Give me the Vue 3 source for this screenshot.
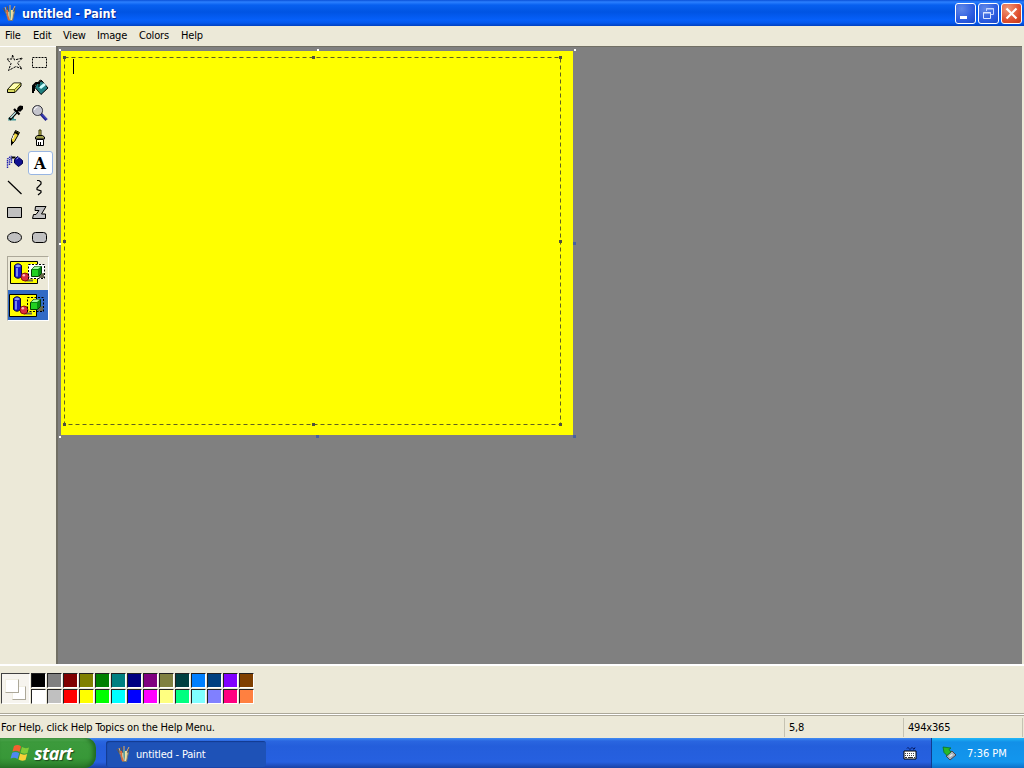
<template>
  <div class="desktop">
    <!-- Title bar -->
    <header class="title-bar">
      <svg class="app-icon" width="16" height="18" viewBox="0 0 16 18">
        <path v-for="(p, i) in cupIcon" :key="i" :d="p.d" :fill="p.fill" :stroke="p.stroke" />
      </svg>
      <h1 class="title">untitled - Paint</h1>
      <div class="window-buttons">
        <button class="win-btn" title="Minimize">
          <svg width="19" height="19" viewBox="0 0 19 19"><path d="M4 12h7v3H4z" fill="#fff" /></svg>
        </button>
        <button class="win-btn" title="Restore">
          <svg width="19" height="19" viewBox="0 0 19 19">
            <path d="M7.500 7V4.500h7v6H12M7 5h8" fill="none" stroke="#c4d4ff" />
            <path d="M4.500 8.500h7v6h-7zM4 9h8" fill="none" stroke="#dce6ff" />
          </svg>
        </button>
        <button class="win-btn close" title="Close">
          <svg width="19" height="19" viewBox="0 0 19 19"><path d="M4.500 4.500l10 10M14.500 4.500l-10 10" stroke="#fff" stroke-width="2.200" /></svg>
        </button>
      </div>
    </header>

    <!-- Menu -->
    <nav class="menu-bar">
      <span v-for="item in menu" :key="item.label" class="menu-item" :style="{ width: item.width + 'px' }">{{ item.label }}</span>
    </nav>

    <main class="workspace">
      <aside class="toolbox">
        <div class="tools">
          <button
            v-for="tool in tools"
            :key="tool.name"
            class="tool"
            :class="{ active: tool.name === activeTool }"
            :title="tool.name"
            @click="activeTool = tool.name"
          >
            <span v-if="tool.name === 'Text'" class="letter">A</span>
            <svg v-else width="25" height="25" viewBox="0 0 25 25">
              <path
                v-for="(p, i) in tool.paths"
                :key="i"
                :d="p.d"
                :fill="p.fill || 'none'"
                :stroke="p.stroke || 'none'"
                :stroke-width="p.width || 1"
                :stroke-dasharray="p.dash"
              />
            </svg>
          </button>
        </div>
        <div class="options">
          <div v-for="mode in ['opaque', 'transparent']" :key="mode" class="option" :class="mode">
            <svg width="40" height="29" viewBox="0 0 40 29">
              <path d="M2.500 3.500h27v22h-27z" fill="#ff0" stroke="#000" />
              <path v-if="mode === 'opaque'" d="M20 6h17v15H20z" fill="#fff" />
              <path d="M6.500 7.500q3.500-3.500 7 0v11q-3.500 3.500-7 0z" fill="#1818c8" stroke="#000040" />
              <path d="M7 8q3-3 6 0q-3 2.500-6 0" fill="#8898f0" />
              <path d="M9 10v8.500" stroke="#98b0ff" stroke-width="1.500" />
              <path d="M17 23.500h8v-2h-8zM31 20h5v-5l-5 1z" fill="#68684c" />
              <circle cx="17" cy="19" r="4" fill="#d83040" stroke="#700" stroke-width=".8" />
              <circle cx="15.800" cy="17.300" r="1.300" fill="#fbb" />
              <path d="M23.500 11.500l3-3h7v7l-3 3h-7z" fill="#0a8a10" stroke="#043c04" />
              <path d="M24 11l3-2.500h6l-3 2.500z" fill="#a0f8a0" />
              <path d="M24 12h6v6h-6z" fill="#20d020" />
              <path d="M20.500 6.500h16v14h-16z" fill="none" stroke="#000" stroke-dasharray="2 1.500" />
            </svg>
          </div>
        </div>
      </aside>

      <section class="canvas-area">
        <div class="canvas">
          <div class="caret"></div>
          <svg class="selection" width="517" height="389" viewBox="0 0 517 389">
            <rect x="5.500" y="8.500" width="496" height="367" fill="none" stroke="#606020" stroke-dasharray="4 3" />
            <rect v-for="h in textHandles" :key="h.join()" :x="h[0]" :y="h[1]" width="3" height="3" fill="#505040" />
            <rect v-for="h in canvasHandles" :key="h.join()" :x="h[0]" :y="h[1]" :width="h[3]" :height="h[3]" :fill="h[2]" />
          </svg>
        </div>
      </section>
    </main>

    <!-- Color box -->
    <section class="color-box">
      <div class="current-colors">
        <span class="chip back"></span>
        <span class="chip front"></span>
      </div>
      <div class="palette">
        <span v-for="c in colors" :key="c" class="swatch" :style="{ backgroundColor: c }"></span>
      </div>
    </section>

    <footer class="status-bar">
      <span class="status-help">For Help, click Help Topics on the Help Menu.</span>
      <span class="status-cell">5,8</span>
      <span class="status-cell size">494x365</span>
    </footer>

    <!-- Taskbar -->
    <div class="taskbar">
      <button class="start">
        <svg width="20" height="20" viewBox="0 0 20 20">
          <path d="M4 3q4-2 7 .5L9.500 9q-3-2-7-.5z" fill="#f46030" />
          <path d="M12 4q3 2 7 .5L17.500 10q-4 1.500-7-.5z" fill="#80cc38" />
          <path d="M2.200 9.700q4-1.500 7 .5L7.500 16q-3-2-7-.5z" fill="#5088f0" />
          <path d="M10.200 10.600q3 2 7 .5L15.500 17q-4 1.500-7-.5z" fill="#f8d038" />
        </svg>
        <span>start</span>
      </button>
      <button class="task">
        <svg width="16" height="18" viewBox="0 0 16 18">
          <path v-for="(p, i) in cupIcon" :key="i" :d="p.d" :fill="p.fill" :stroke="p.stroke" />
        </svg>
        <span>untitled - Paint</span>
      </button>
      <svg class="keyboard" width="14" height="14" viewBox="0 0 14 14">
        <path d="M4 2.500q1-2 2 0t2 0t2 0t2-1" fill="none" stroke="#001050" />
        <path d="M1 5h12v8H1z" fill="#fff" stroke="#000" />
        <path d="M2 7.500h10M2 9.500h10" stroke="#444" stroke-dasharray="1 1" />
        <path d="M2 11.500h2m1 0h5m1 0h1" stroke="#333" />
      </svg>
      <div class="tray">
        <svg width="16" height="16" viewBox="0 0 16 16">
          <path d="M5 11l6-5 4 4-6 5z" fill="#a8b0b8" stroke="#445" />
          <path d="M8 11l3-2 1 1-3 2z" fill="#e8ecf0" />
          <path d="M2 2l8 1-2 1.500 2 2.500-4 3.500-3-3z" fill="#28b828" stroke="#086818" stroke-width=".7" />
        </svg>
        <span class="clock">7:36 PM</span>
      </div>
    </div>
  </div>
</template>

<script setup>
import { ref } from 'vue';

const activeTool = ref('Text');

const menu = [
  { label: 'File', width: 28 },
  { label: 'Edit', width: 30 },
  { label: 'View', width: 34 },
  { label: 'Image', width: 42 },
  { label: 'Colors', width: 42 },
  { label: 'Help', width: 30 },
];

const grey = '#c0c0c0';

const tools = [
  {
    name: 'Free-Form Select',
    paths: [{ d: 'M10.500 5l2 5 8-2-5 5 4.500 6-6-2.500-7.500 4 2.500-7-4-4.500h5z', stroke: '#000', dash: '2.500 1' }],
  },
  { name: 'Select', paths: [{ d: 'M5.500 7.500h14v10h-14z', stroke: '#000', dash: '2 1' }] },
  {
    name: 'Eraser',
    paths: [
      { d: 'M5.500 14.500l6-6.500h7.500v3l-6 6.500H5.500z', fill: '#d8d860', stroke: '#000' },
      { d: 'M6.500 14l5.500-5.500h6L12.500 14z', fill: '#ffffb0' },
      { d: 'M5.500 14.500h7v3m0-3l6-6', stroke: '#444400', width: 0.7 },
    ],
  },
  {
    name: 'Fill With Color',
    paths: [
      { d: 'M10 8l5-2 6 7-7 6.500-6-7z', fill: '#208080', stroke: '#000' },
      { d: 'M12 12l5-4 2 2-5 4z', fill: '#c8ffff' },
      { d: 'M6 18V11l3-3h4M7 10v6', stroke: '#000', width: 2 },
      { d: 'M12 12V6l2-1 2 2', stroke: '#000' },
    ],
  },
  {
    name: 'Pick Color',
    paths: [
      { d: 'M6 20.500h8v-1.500h-2v-2H7z', fill: '#409898' },
      { d: 'M7.500 19.500l7.500-8', stroke: '#000', width: 3 },
      { d: 'M8.500 18l6-6.500', stroke: '#c0ecec', width: 1.3 },
      { d: 'M12 9l5.500 5.500M15 11.500l4.500-4.500', stroke: '#000', width: 2.2 },
      { d: 'M16 7l2-1.500 3 .5v3l-3 3-3-3z', fill: '#000' },
    ],
  },
  {
    name: 'Magnifier',
    paths: [
      { d: 'M14 14l5.500 6', stroke: '#202090', width: 3 },
      { d: 'M15 14.500l5 5', stroke: '#5860d0' },
      { d: 'M10.500 5.500a5 5 0 1 0 .1 0z', fill: '#c4c4cc', stroke: '#303038' },
      { d: 'M7.500 10q0-3 3-3', stroke: '#fff' },
    ],
  },
  {
    name: 'Pencil',
    paths: [
      { d: 'M13.500 5.500l4 2-5 9-3 3v-5z', fill: '#f0d840', stroke: '#000' },
      { d: 'M13.500 6l3.500 2-1 2-3.500-2zM9 16l3 1-3 4z', fill: '#000' },
      { d: 'M12 10l-1.500 4', stroke: '#fff' },
    ],
  },
  {
    name: 'Brush',
    paths: [
      { d: 'M12 5h2v6h-2z', fill: '#d8d060', stroke: '#303000' },
      { d: 'M8.500 14v-2l2-1.500h5l2 1.500v2z', fill: '#a0a050', stroke: '#000' },
      { d: 'M9.500 14.500h7v6h-7z', fill: '#fff', stroke: '#000' },
      { d: 'M11.500 17v3m2-3v3', stroke: '#000' },
    ],
  },
  {
    name: 'Airbrush',
    paths: [
      { d: 'M5.500 18V9l4-3M7.500 15v-5l3-3M9.500 13V9', stroke: '#2020b0', width: 1.4, dash: '1.500 .7' },
      { d: 'M12.500 9.500l3-3 5 4v3l-4 3-4-3.500z', fill: '#101090', stroke: '#000048' },
      { d: 'M14.500 9l2-1.500', stroke: '#b8b8ff' },
      { d: 'M9.500 7.500h4', stroke: '#000', width: 2 },
    ],
  },
  { name: 'Text' },
  { name: 'Line', paths: [{ d: 'M6 6l13.500 13', stroke: '#000', width: 1.2 }] },
  { name: 'Curve', paths: [{ d: 'M10 5.500h2l2 1.500v2l-4 4v1.500l4 1.500v1.500l-3 2.500', stroke: '#000', width: 1.2 }] },
  { name: 'Rectangle', paths: [{ d: 'M5.500 7.500h14v10h-14z', fill: grey, stroke: '#000' }] },
  { name: 'Polygon', paths: [{ d: 'M8.500 6.500h10.500l-4.500 7.500h4v4.500h-13l1-4h2.500l3-4h-4z', fill: grey, stroke: '#000' }] },
  { name: 'Ellipse', paths: [{ d: 'M5.500 12.500a7 5 0 1 0 14 0a7 5 0 1 0-14 0z', fill: grey, stroke: '#000' }] },
  {
    name: 'Rounded Rectangle',
    paths: [{ d: 'M8.500 7.500h8q3 0 3 3v4q0 3-3 3h-8q-3 0-3-3v-4q0-3 3-3z', fill: grey, stroke: '#000' }],
  },
];

// Paint cup with brushes, used in the title bar and the task button
const cupIcon = [
  { d: 'M5 9L3 3M8 9V1M10 8l3-6', fill: 'none', stroke: '#e8b060' },
  { d: 'M4 9L1 4M6 7L5 2M12 8l1-4', fill: 'none', stroke: '#705838' },
  { d: 'M3.500 7.500h9l-2 9h-4z', fill: '#c8c0a0', stroke: '#78786c' },
  { d: 'M4 6h2v5l2 5H6z', fill: '#e06838', stroke: 'none' },
  { d: 'M7 5h2v7l-1 4z', fill: '#58a0a0', stroke: 'none' },
  { d: 'M9 6h2l-1 10H9z', fill: '#f0e0a0', stroke: 'none' },
];

const textHandles = [
  [4, 7], [253, 7], [500, 7],
  [4, 191], [500, 191],
  [4, 374], [253, 374], [500, 374],
];

const canvasHandles = [
  [0, 0, '#fff', 2], [258, 0, '#fff', 2], [515, 0, '#fff', 2],
  [0, 194, '#fff', 2], [514, 193, '#4860a0', 3],
  [0, 387, '#fff', 2], [257, 386, '#4860a0', 3], [514, 386, '#4860a0', 3],
];

const colors = [
  '#000000', '#808080', '#800000', '#808000', '#008000', '#008080', '#000080', '#800080',
  '#808040', '#004040', '#0080ff', '#004080', '#8000ff', '#804000',
  '#ffffff', '#c0c0c0', '#ff0000', '#ffff00', '#00ff00', '#00ffff', '#0000ff', '#ff00ff',
  '#ffff80', '#00ff80', '#80ffff', '#8080ff', '#ff0080', '#ff8040',
];
</script>

<style>
body {
  margin: 0;
  overflow: hidden;
}
</style>

<style scoped>
.desktop {
  width: 1024px;
  height: 768px;
  display: flex;
  flex-direction: column;
  background: #ece9d8;
  color: #000;
  font-family: "DejaVu Sans Condensed", "DejaVu Sans", sans-serif;
  font-stretch: condensed;
  font-size: 11px;
  letter-spacing: -0.19px;
}

.desktop * {
  box-sizing: border-box;
}

button {
  font: inherit;
  letter-spacing: inherit;
  padding: 0;
  border: none;
  background: none;
}

svg {
  display: block;
  flex: none;
}

.title-bar {
  height: 26px;
  flex: none;
  display: flex;
  align-items: center;
  padding: 0 2px;
  background: linear-gradient(#0a50d8 0, #2c80ff 2px, #0860f0 5px, #0054e3 12px, #0660fa 20px, #0458ec 23px, #0040c0 26px);
}

.title {
  flex: 1;
  margin: 0 0 0 4px;
  color: #fff;
  font-size: 12.5px;
  font-weight: bold;
  letter-spacing: -0.1px;
  text-shadow: 1px 1px 0 #0a2a90;
}

.window-buttons {
  display: flex;
  gap: 2px;
}

.win-btn {
  width: 21px;
  height: 21px;
  border: 1px solid #fff;
  border-radius: 3px;
  background: radial-gradient(circle at 30% 25%, #6088e8, #2c5ce0 60%, #1848c8);
}

.win-btn.close {
  background: radial-gradient(circle at 30% 25%, #f09878, #e05030 60%, #c03818);
}

.menu-bar {
  height: 20px;
  flex: none;
  display: flex;
  align-items: center;
  padding: 0 0 2px 5px;
}

.menu-item {
  flex: none;
}

.workspace {
  height: 618px;
  flex: none;
  display: flex;
}

.toolbox {
  width: 56px;
  flex: none;
  padding: 3px 0 0 2px;
  border-top: 1px solid #fff;
}

.tools {
  display: grid;
  grid-template-columns: 25px 25px;
  grid-auto-rows: 25px;
}

.tool {
  display: flex;
  align-items: center;
  justify-content: center;
}

.tool.active {
  margin: 1px -1px 0 1px;
  border: 1px solid #98b5e2;
  border-radius: 3px;
  background: #fff;
}

.letter {
  padding-right: 1px;
  font: bold 17px/20px "DejaVu Serif", serif;
  font-stretch: condensed;
  letter-spacing: 0;
}

.options {
  width: 42px;
  height: 65px;
  margin: 6px 0 0 5px;
  border: 1px solid;
  border-color: #aca899 #fff #fff #aca899;
}

.option {
  height: 33px;
  padding-top: 1px;
}

.option.transparent {
  height: 30px;
  background: #316ac5;
}

.option.transparent svg {
  margin-left: -1px;
}

.canvas-area {
  flex: 1;
  margin-right: 2px;
  padding: 4px 0 0 3px;
  border-left: 2px solid #716f64;
  border-top: 1px solid #716f64;
  background: #808080;
}

.canvas {
  position: relative;
  width: 512px;
  height: 384px;
  background: #ff0;
}

.caret {
  position: absolute;
  left: 12px;
  top: 8px;
  width: 1px;
  height: 15px;
  background: #000;
}

.selection {
  position: absolute;
  left: -2px;
  top: -2px;
}

.color-box {
  height: 50px;
  flex: none;
  display: flex;
  align-items: flex-start;
  gap: 1px;
  padding: 7px 0 0 1px;
  border-top: 2px solid #fff;
  border-bottom: 1px solid #aca899;
}

.current-colors {
  position: relative;
  width: 29px;
  height: 31px;
  border: 1px solid #fff;
  border-top-color: #404040;
  border-left-color: #404040;
  background: #f6f4ee;
}

.chip {
  position: absolute;
  width: 14px;
  height: 14px;
  background: #fff;
  border: 1px solid;
  border-color: #f1efe2 #aca899 #aca899 #f1efe2;
}

.chip.front {
  left: 3px;
  top: 5px;
}

.chip.back {
  left: 10px;
  top: 12px;
}

.palette {
  display: grid;
  grid-template-columns: repeat(14, 15px);
  grid-auto-rows: 15px;
  gap: 1px;
}

.swatch {
  border: 1px solid #fff;
  border-top-color: #202020;
  border-left-color: #202020;
}

.status-bar {
  height: 24px;
  flex: none;
  display: flex;
  align-items: stretch;
  padding: 4px 1px 1px 1px;
  line-height: 20px;
  background: linear-gradient(#fff 1px, #aca899 1px, #aca899 2px, #ece9d8 2px);
}

.status-help {
  flex: 1;
}

.status-cell {
  width: 119px;
  padding-left: 4px;
  border-left: 1px solid #c5c2b2;
}

.status-cell.size {
  width: 120px;
  border-right: 1px solid #c5c2b2;
}

.taskbar {
  height: 30px;
  flex: none;
  display: flex;
  align-items: stretch;
  color: #fff;
  background: linear-gradient(#3f8cf3 0, #2a66e0 3px, #245edb 8px, #2660e0 24px, #1941a5 30px);
}

.start {
  width: 96px;
  display: flex;
  align-items: center;
  gap: 4px;
  padding: 0 0 1px 10px;
  border-radius: 0 10px 12px 0;
  background: linear-gradient(#5cb85c 0, #3c9a3c 4px, #389838 20px, #2a7a2a 30px);
  box-shadow: inset -3px 0 4px #206820;
  color: #fff;
  font: italic bold 18px "Open Sans", sans-serif;
  letter-spacing: -0.6px;
  text-shadow: 1px 1px 1px #1c481c;
}

.task {
  width: 160px;
  margin: 3px 0 1px 10px;
  display: flex;
  align-items: center;
  gap: 4px;
  padding-left: 10px;
  border-radius: 3px;
  background: #1e52b7;
  box-shadow: inset 1px 1px 1px #123a90;
  color: #fff;
}

.keyboard {
  margin: 8px 14px 0 auto;
}

.tray {
  width: 93px;
  display: flex;
  align-items: center;
  gap: 10px;
  padding: 0 0 0 9px;
  border-left: 1px solid #103c90;
  background: linear-gradient(#20b8f8 0, #1290e8 4px, #1296ee 24px, #0c70c8 30px);
}

.clock {
  letter-spacing: 0;
}
</style>
